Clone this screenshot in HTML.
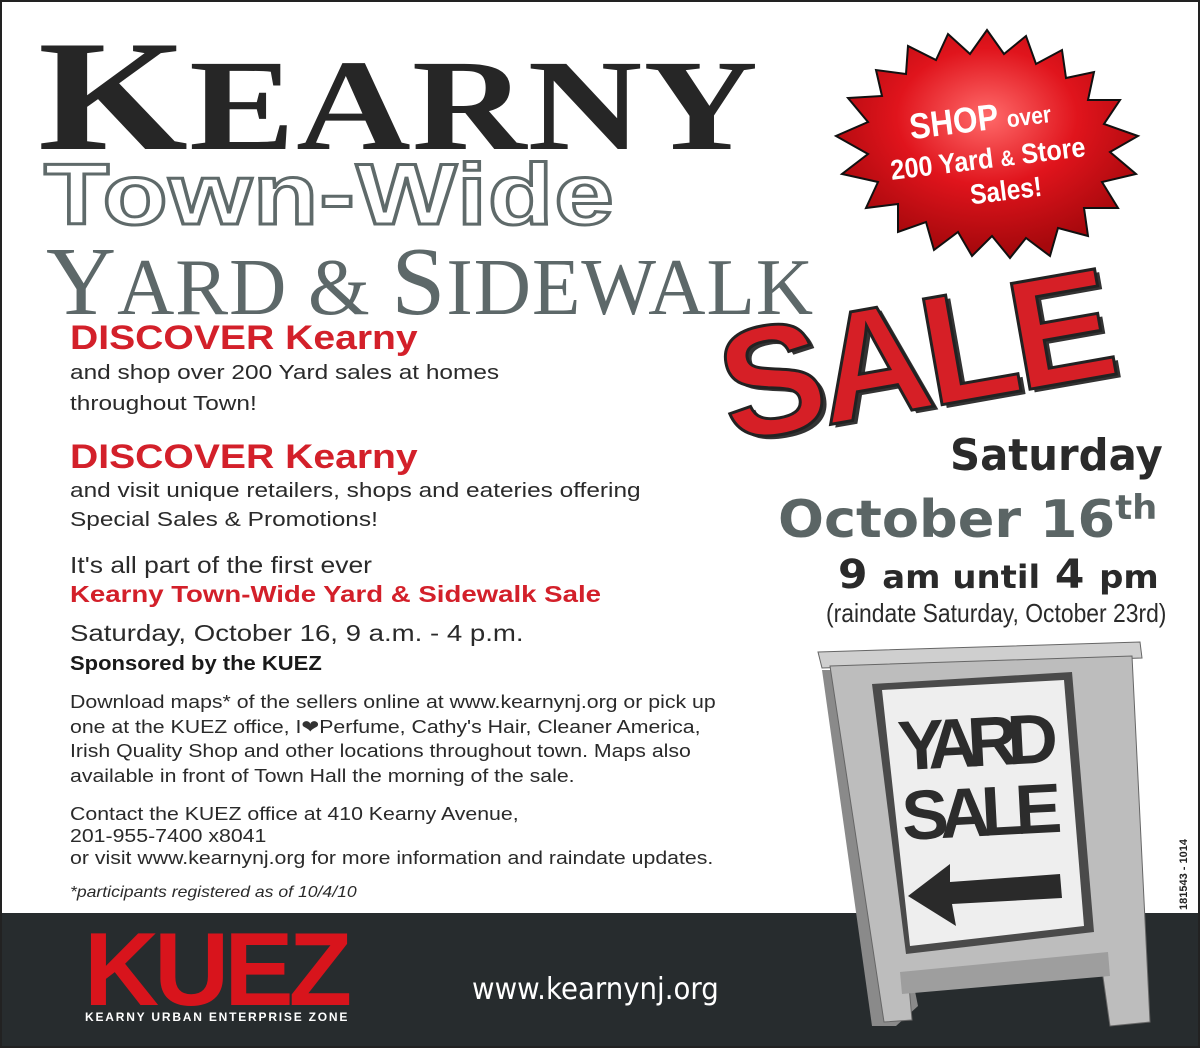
<!DOCTYPE html>
<html><head><meta charset="utf-8">
<style>
*{margin:0;padding:0;box-sizing:border-box}
body{width:1200px;height:1050px;background:#fff;position:relative;overflow:hidden;font-family:"Liberation Sans",sans-serif}
.frame{position:absolute;left:0;top:0;width:1200px;height:1048px;border:2px solid #222}
.abs{position:absolute;white-space:nowrap}
.band{position:absolute;left:2px;top:913px;width:1196px;height:133px;background:#272c2e}
.l{position:absolute;left:70px;white-space:nowrap;transform-origin:left top;color:#2a2a2a}
.h{font-size:34px;font-weight:bold;color:#d3202a;line-height:36px;transform:scaleX(1.15)}
.b{font-size:20px;line-height:30px;transform:scaleX(1.22)}
.s{font-size:18.5px;line-height:24.6px;transform:scaleX(1.15)}
</style></head><body>
<div class="frame"></div>
<div class="band"></div>

<div class="abs" style="left:38px;top:17px;font-family:'Liberation Serif',serif;font-weight:bold;color:#262626;letter-spacing:1px;transform:scaleX(1.22);transform-origin:left top;line-height:160px">
<span style="font-size:158px">K</span><span style="font-size:130px">EARNY</span></div>

<div class="abs" style="left:44px;top:146px;font-family:'Liberation Sans',sans-serif;font-weight:bold;font-size:86px;color:#fff;-webkit-text-stroke:3px #5f6a6a;letter-spacing:1px;transform:scaleX(1.24);transform-origin:left top">Town-Wide</div>

<div class="abs" style="left:46px;top:226px;font-family:'Liberation Serif',serif;color:#5d6869;transform:scaleX(0.99);transform-origin:left top;letter-spacing:1px">
<span style="font-size:98px;line-height:96px">Y</span><span style="font-size:80px">ARD &amp; </span><span style="font-size:98px">S</span><span style="font-size:80px">IDEWALK</span></div>

<!-- starburst -->
<svg class="abs" style="left:826px;top:26px" width="322" height="234" viewBox="0 0 322 234">
<defs><radialGradient id="g" cx="50%" cy="38%" r="60%"><stop offset="0" stop-color="#ff6a6a"/><stop offset=".5" stop-color="#e0141c"/><stop offset="1" stop-color="#a5080c"/></radialGradient></defs>
<polygon fill="url(#g)" stroke="#111" stroke-width="2" points="
161,4 178,28 200,10 210,38 236,24 240,52 268,46 262,74 294,74 278,98 312,110 284,126 310,148 276,156 292,182 258,182 262,210 232,202 224,230 200,212 184,232 166,210 146,230 132,206 108,224 100,196 72,206 72,178 40,182 52,156 16,148 42,128 10,110 42,96 22,72 56,70 50,44 80,48 82,20 110,34 122,8 144,28"/>
<g font-family="'Liberation Sans',sans-serif" font-weight="bold" fill="#fff" transform="rotate(-7 161 117)">
<text x="86" y="104" font-size="36" textLength="142" lengthAdjust="spacingAndGlyphs">SHOP <tspan font-size="24">over</tspan></text>
<text x="62" y="142" font-size="28" textLength="196" lengthAdjust="spacingAndGlyphs">200 Yard <tspan font-size="22">&amp;</tspan> Store</text>
<text x="138" y="176" font-size="28" textLength="72" lengthAdjust="spacingAndGlyphs">Sales!</text></g>
</svg>

<!-- SALE -->
<div class="abs" style="left:708px;top:316px;font-family:'Liberation Sans',sans-serif;font-weight:bold;font-size:156px;line-height:150px;color:#d61f26;-webkit-text-stroke:3px #222;transform:rotate(-10deg);transform-origin:left top;letter-spacing:-6px;text-shadow:4px 4px 0 #333">SALE</div>

<div class="abs" style="left:950px;top:430px;font-size:44px;font-weight:bold;color:#2a2a2a;font-family:'DejaVu Sans',sans-serif;transform:scaleX(.95);transform-origin:left top">Saturday</div>
<div class="abs" style="left:778px;top:488px;font-size:52px;font-weight:bold;color:#5b6565;font-family:'DejaVu Sans',sans-serif;transform:scaleX(1.04);transform-origin:left top">October 16<sup style="font-size:34px;vertical-align:18px">th</sup></div>
<div class="abs" style="left:838px;top:552px;font-size:40px;font-weight:bold;color:#2a2a2a;font-family:'DejaVu Sans',sans-serif;transform:scaleX(1.06);transform-origin:left top">9 <span style="font-size:32px">am until</span> 4 <span style="font-size:32px">pm</span></div>
<div class="abs" style="left:826px;top:598px;font-size:26px;color:#2a2a2a;font-family:'Liberation Sans',sans-serif;transform:scaleX(.88);transform-origin:left top">(raindate Saturday, October 23rd)</div>

<!-- left text -->
<div class="l h" style="top:320px">DISCOVER Kearny</div>
<div class="l b" style="top:358px;line-height:31px">and shop over 200 Yard sales at homes<br>throughout Town!</div>
<div class="l h" style="top:439px">DISCOVER Kearny</div>
<div class="l b" style="top:477px;line-height:29px">and visit unique retailers, shops and eateries offering<br>Special Sales &amp; Promotions!</div>
<div class="l" style="top:551px;font-size:23px;line-height:28px;transform:scaleX(1.15)">It's all part of the first ever</div>
<div class="l" style="top:580px;font-size:23px;line-height:28px;color:#d3202a;font-weight:bold;transform:scaleX(1.2)">Kearny Town-Wide Yard &amp; Sidewalk Sale</div>
<div class="l" style="top:619px;font-size:23px;line-height:28px;transform:scaleX(1.2)">Saturday, October 16, 9 a.m. - 4 p.m.</div>
<div class="l" style="top:651px;font-size:20px;line-height:26px;font-weight:bold;color:#1a1a1a;transform:scaleX(1.1)">Sponsored by the KUEZ</div>
<div class="l s" style="top:690px">Download maps* of the sellers online at www.kearnynj.org or pick up<br>one at the KUEZ office, I<span style="color:#333">&#10084;</span>Perfume, Cathy's Hair, Cleaner America,<br>Irish Quality Shop and other locations throughout town. Maps also<br>available in front of Town Hall the morning of the sale.</div>
<div class="l s" style="top:803px;line-height:22px">Contact the KUEZ office at 410 Kearny Avenue,<br>201-955-7400 x8041<br>or visit www.kearnynj.org for more information and raindate updates.</div>
<div class="l" style="top:884px;font-size:16px;font-style:italic;transform:scaleX(1.1)">*participants registered as of 10/4/10</div>

<!-- KUEZ logo -->
<div class="abs" style="left:84px;top:920px;font-family:'Liberation Sans',sans-serif;font-weight:bold;font-size:104px;line-height:100px;color:#d8141c;letter-spacing:-5px;transform-origin:left top">KUEZ</div>
<div class="abs" style="left:85px;top:1010px;font-size:12px;font-weight:bold;color:#fff;letter-spacing:1.8px">KEARNY URBAN ENTERPRISE ZONE</div>
<div class="abs" style="left:472px;top:972px;font-size:30px;color:#fff;font-family:'DejaVu Sans',sans-serif;transform:scaleX(.92);transform-origin:left top">www.kearnynj.org</div>

<!-- sign -->
<svg class="abs" style="left:810px;top:636px" width="350" height="396" viewBox="0 0 350 396">
<polygon points="12,34 40,34 108,370 86,390 62,390" fill="#8a8a8a"/>
<polygon points="8,16 330,6 332,22 12,32" fill="#cfcfcf" stroke="#666"/>
<polygon points="20,30 322,20 340,386 300,390 290,320 98,338 102,384 74,386" fill="#bdbdbd" stroke="#666"/>
<polygon points="62,48 262,36 284,296 96,318" fill="#4a4a4a"/>
<polygon points="72,54 254,44 274,290 100,310" fill="#eeeeee"/>
<text x="88" y="130" font-family="'Liberation Sans',sans-serif" font-weight="bold" font-size="70" fill="#2c2c2c" transform="rotate(-3 170 110)" textLength="160">YARD</text>
<text x="92" y="200" font-family="'Liberation Sans',sans-serif" font-weight="bold" font-size="70" fill="#2c2c2c" transform="rotate(-3 170 180)" textLength="160">SALE</text>
<polygon points="98,260 140,228 140,246 250,238 252,262 142,268 146,290" fill="#2a2a2a"/>
<polygon points="90,336 298,316 300,340 92,358" fill="#9e9e9e"/>
</svg>

<div class="abs" style="left:1178px;top:910px;font-size:11px;font-weight:bold;color:#222;transform:rotate(-90deg);transform-origin:left top">181543 - 1014</div>
</body></html>
